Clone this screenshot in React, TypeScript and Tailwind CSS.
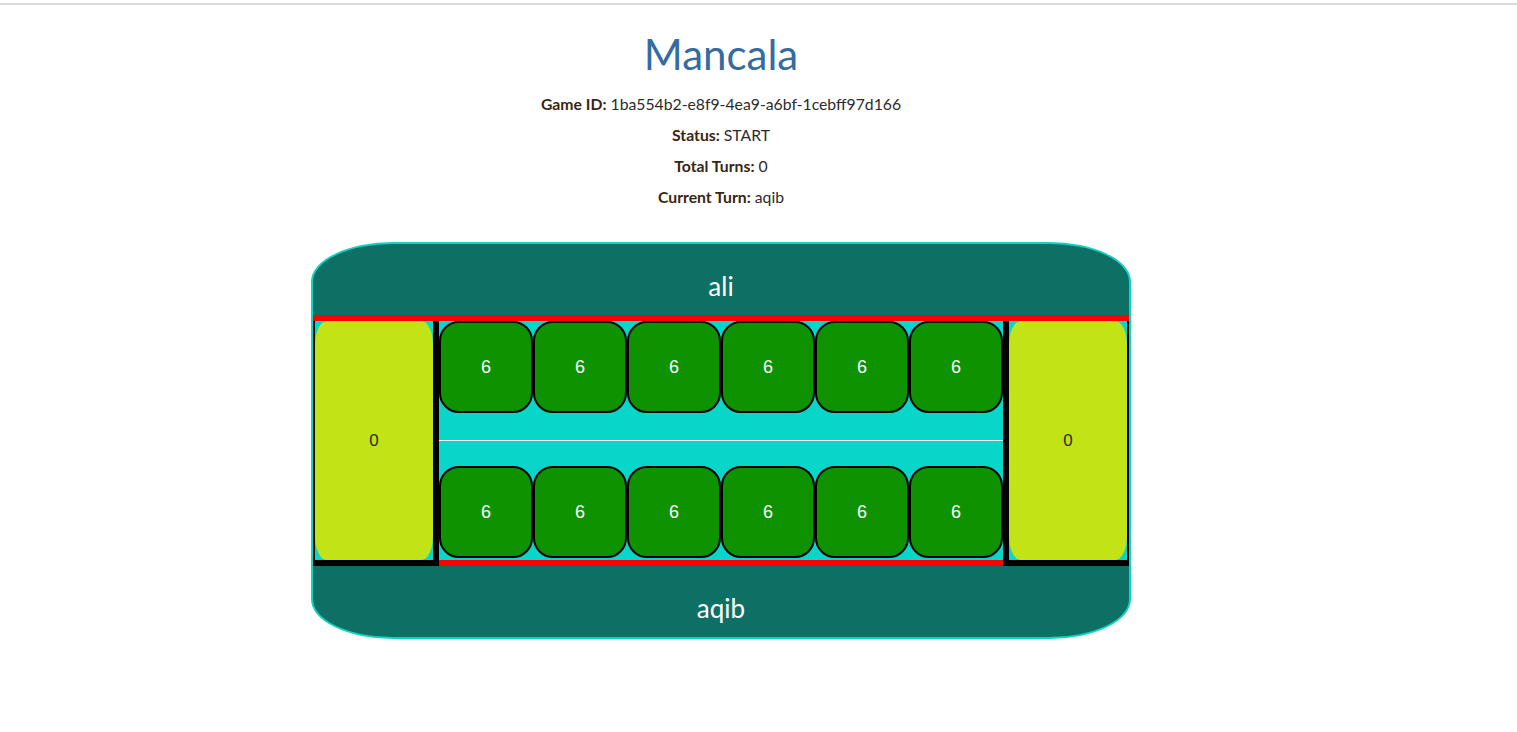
const pitsTop = [6, 6, 6, 6, 6, 6];
const pitsBottom = [6, 6, 6, 6, 6, 6];

const Pit = ({ count }: { count: number }) => (
  <div className="w-[94px] h-[92px] flex items-center justify-center bg-[#0e9200] border-2 border-black rounded-[20px] text-white text-[18px] font-['Liberation_Sans',Arial,sans-serif]">
    {count}
  </div>
);

const Store = ({ count, side }: { count: number; side: "left" | "right" }) => (
  <div
    className={
      side === "left"
        ? "w-[127px] h-[245px] bg-[#08d6c8] border-l-2 border-r-[6px] border-b-[6px] border-black"
        : "w-[127px] h-[245px] bg-[#08d6c8] border-l-[6px] border-r-2 border-b-[6px] border-black"
    }
  >
    <div className="w-full h-full bg-[#c2e416] rounded-[10%] flex items-center justify-center text-[#2a2a1a] text-[17px] font-['Liberation_Sans',Arial,sans-serif]">
      {count}
    </div>
  </div>
);

export default function App() {
  return (
    <div className="min-h-screen bg-white font-['Lato','Open_Sans',sans-serif]">
      <div className="pt-[3px]">
        <div className="h-[2px] bg-[#dadade]" />
      </div>
      <div className="w-[1442px] flex flex-col items-center">
        <h1 className="mt-[25px] text-[42px] leading-[48px] text-[#356ba0]">Mancala</h1>
        <div className="mt-[10px] flex flex-col items-center text-[15.75px] leading-[31px] text-[#2b2b2b]">
          <p>
            <span className="font-bold text-[#3a2612]">Game ID:</span> 1ba554b2-e8f9-4ea9-a6bf-1cebff97d166
          </p>
          <p>
            <span className="font-bold text-[#3a2612]">Status:</span> START
          </p>
          <p>
            <span className="font-bold text-[#3a2612]">Total Turns:</span> 0
          </p>
          <p>
            <span className="font-bold text-[#3a2612]">Current Turn:</span> aqib
          </p>
        </div>

        <div className="mt-[30px] w-[820px] border-2 border-[#12d2c2] rounded-[10%] overflow-hidden bg-[#0e6f65]">
          <div className="h-[77px] pt-[29px] border-b-[6px] border-[#ff0000] text-center text-white text-[26px] leading-[26px]">
            ali
          </div>
          <div className="flex">
            <Store count={0} side="left" />
            <div className="w-[564px] h-[245px] bg-[#08d6c8] border-b-[6px] border-[#ff0000] flex flex-col">
              <div className="flex">
                {pitsTop.map((c, i) => (
                  <Pit key={i} count={c} />
                ))}
              </div>
              <div className="h-[27px]" />
              <div className="h-px bg-white" />
              <div className="h-[25px]" />
              <div className="flex">
                {pitsBottom.map((c, i) => (
                  <Pit key={i} count={c} />
                ))}
              </div>
            </div>
            <Store count={0} side="right" />
          </div>
          <div className="h-[71px] pt-[29px] text-center text-white text-[26px] leading-[26px]">aqib</div>
        </div>
      </div>
    </div>
  );
}
